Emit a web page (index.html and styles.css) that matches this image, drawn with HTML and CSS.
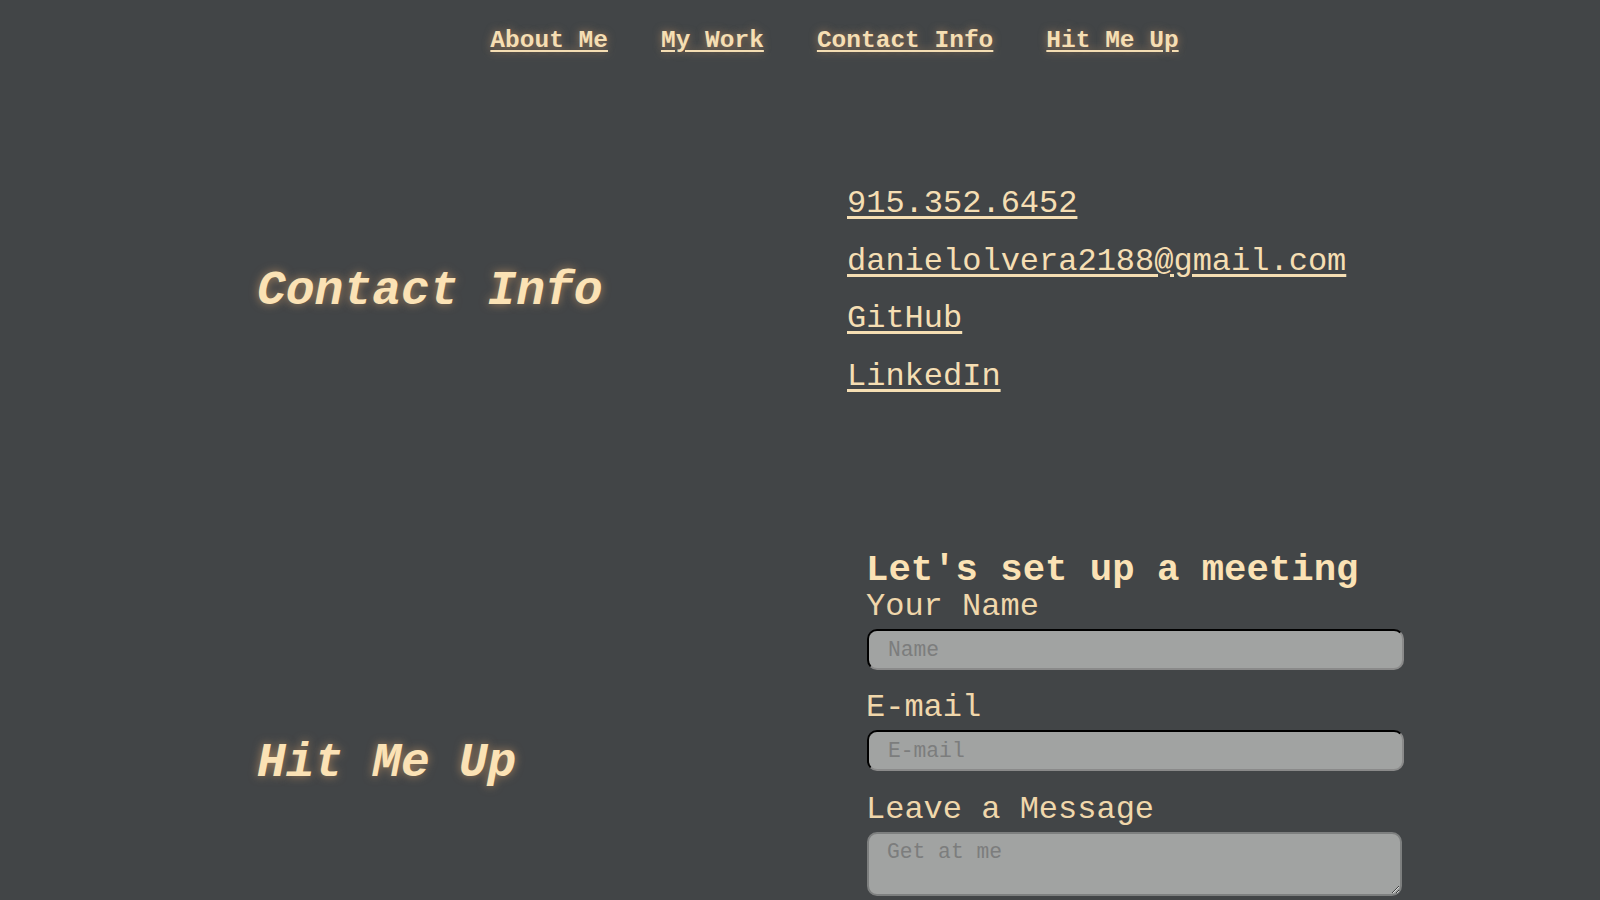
FILE: index.html
```html
<!DOCTYPE html>
<html lang="en">
<head>
<meta charset="utf-8">
<title>Contact</title>
<link rel="stylesheet" href="styles.css">
</head>
<body>
<nav class="nav">
  <a href="#about">About Me</a>
  <a href="#work">My Work</a>
  <a href="#contact">Contact Info</a>
  <a href="#hit">Hit Me Up</a>
</nav>

<section class="row contact" id="contact">
  <h1 class="side-title">Contact Info</h1>
  <div class="links">
    <a href="#">915.352.6452</a>
    <a href="#">danielolvera2188@gmail.com</a>
    <a href="#">GitHub</a>
    <a href="#">LinkedIn</a>
  </div>
</section>

<section class="row hit" id="hit">
  <h1 class="side-title side-title-low">Hit Me Up</h1>
  <form class="form">
    <h2 class="form-title">Let's set up a meeting</h2>
    <label class="label" for="name">Your Name</label>
    <input class="field" id="name" type="text" placeholder="Name">
    <label class="label" for="email">E-mail</label>
    <input class="field" id="email" type="text" placeholder="E-mail">
    <label class="label label-last" for="msg">Leave a Message</label>
    <textarea class="area" id="msg" placeholder="Get at me"></textarea>
  </form>
</section>
</body>
</html>
```

FILE: styles.css
```css
* { box-sizing: border-box; }

body {
  margin: 0;
  background: #424547;
  color: #f5deb3;
  font-family: "Liberation Mono", "Courier New", monospace;
}

.nav {
  display: flex;
  justify-content: center;
  gap: 53px;
  padding: 26px 0 0 69px;
  height: 80px;
}

.nav a {
  color: #f5deb3;
  font-weight: bold;
  font-size: 24.5px;
  line-height: 30px;
  text-decoration: underline;
  text-underline-offset: 3px;
  text-shadow: 0 0 8px rgba(230, 170, 110, 0.55);
}

.row {
  display: flex;
  align-items: center;
  padding-left: 257px;
}

.side-title {
  margin: 0;
  width: 590px;
  flex: none;
  padding-top: 2px;
  font-size: 48px;
  font-weight: bold;
  font-style: italic;
  line-height: 56px;
  color: #fbe2b5;
  text-shadow: 0 0 10px rgba(230, 170, 110, 0.6);
}

.side-title-low {
  padding-top: 8px;
}

.contact {
  padding-top: 95px;
  padding-bottom: 141px;
}

.links {
  display: flex;
  flex-direction: column;
}

.links a {
  color: #f5deb3;
  font-size: 32px;
  line-height: 57.5px;
  text-decoration: underline;
  text-underline-offset: 4px;
}

.form {
  display: flex;
  flex-direction: column;
  width: 539px;
  margin-left: 19px;
  padding-bottom: 76px;
}

.form-title {
  margin: 4px 0 0;
  font-size: 37.3px;
  line-height: 40px;
  font-weight: bold;
  color: #fbe2b5;
}

.label {
  font-size: 32px;
  line-height: 34px;
  color: #f0d7ab;
}

.field {
  margin: 5px 0 21px 1px;
  width: 537px;
  height: 41px;
  border: 2px inset #8a8a8a;
  border-top-color: #1e1f20;
  border-left-color: #1e1f20;
  border-radius: 10px;
  background: #a1a3a2;
  padding: 0 19px;
  font-family: "Liberation Mono", "Courier New", monospace;
  font-size: 21.3px;
  color: #333;
}

#email {
  margin-bottom: 22px;
}

.field::placeholder,
.area::placeholder {
  color: #7c7d7d;
  font-size: 21.3px;
}

.area {
  margin: 5px 0 0 1px;
  width: 535px;
  height: 64px;
  border: 2px solid #7d7f7f;
  border-radius: 10px;
  background: #a1a3a2;
  padding: 6px 18px;
  font-family: "Liberation Mono", "Courier New", monospace;
  font-size: 21.3px;
  resize: both;
}
```
